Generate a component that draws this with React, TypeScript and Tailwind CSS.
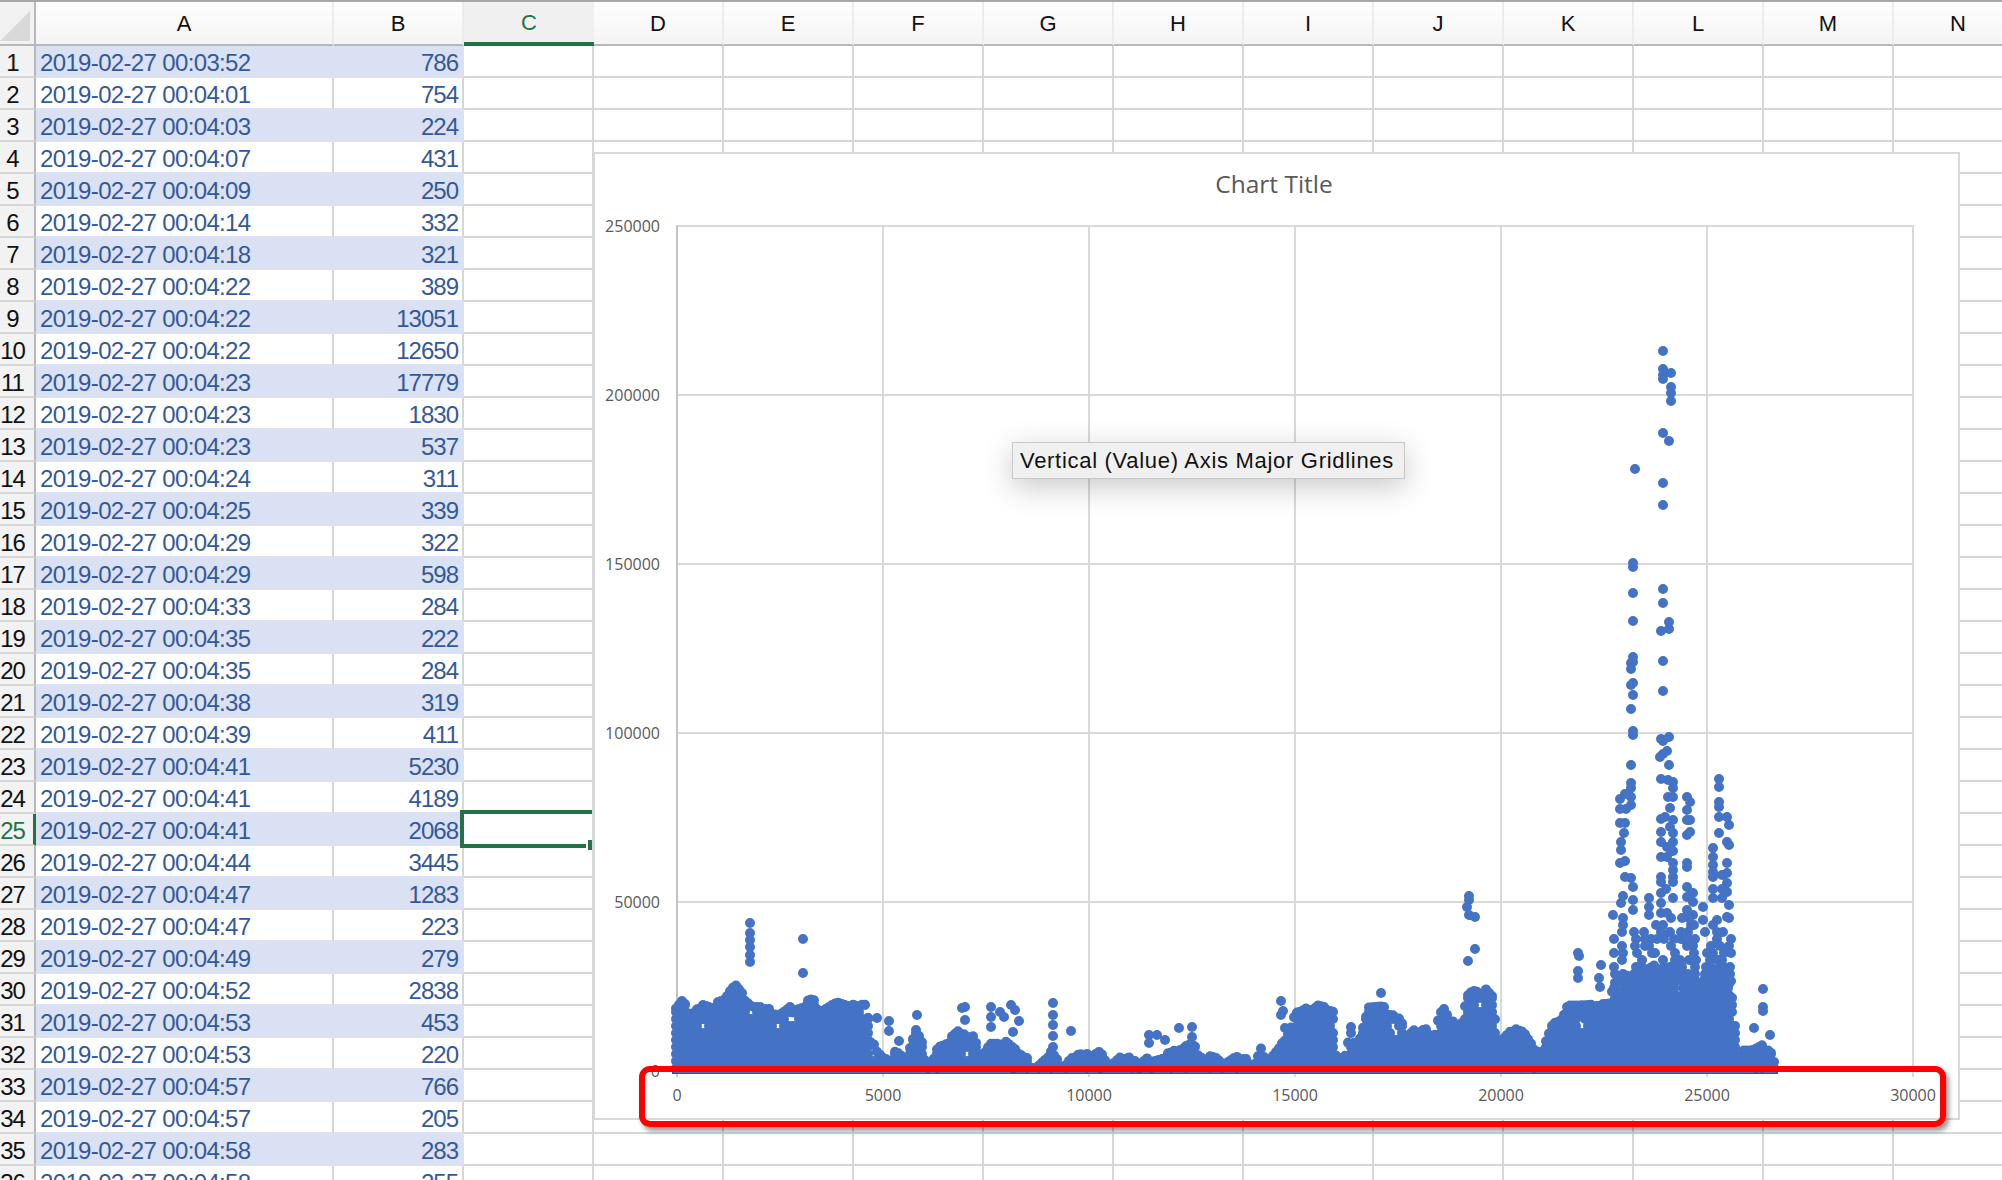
import React from 'react'

const times = ['03:52','04:01','04:03','04:07','04:09','04:14','04:18','04:22','04:22','04:22','04:23','04:23','04:23','04:24','04:25','04:29','04:29','04:33','04:35','04:35','04:38','04:39','04:41','04:41','04:41','04:44','04:47','04:47','04:49','04:52','04:53','04:53','04:57','04:57','04:58','04:58']
const values = [786,754,224,431,250,332,321,389,13051,12650,17779,1830,537,311,339,322,598,284,222,284,319,411,5230,4189,2068,3445,1283,223,279,2838,453,220,766,205,283,255]
const columns = ['D','E','F','G','H','I','J','K','L','M','N']

// top edge of the dot mass, page px
const envelope: [number, number][] = [
  [674,1008],[682,998],[691,1007],[703,993],[715,997],[725,993],[735,977],[743,987],[752,995],[770,995],[776,1013],[787,1005],[796,998],[812,992],[821,998],[837,988],[857,995],[866,995],[868,1008],[870,1032],[877,1037],[883,1043],[899,1050],[906,1057],[916,1027],[921,1037],[928,1052],[939,1037],[950,1033],[965,1020],[975,1035],[979,1050],[991,1030],[999,1030],[1015,1043],[1022,1053],[1035,1057],[1051,1043],[1062,1057],[1071,1045],[1082,1043],[1091,1050],[1102,1043],[1111,1060],[1120,1052],[1129,1048],[1138,1062],[1149,1053],[1171,1047],[1178,1043],[1191,1037],[1205,1047],[1216,1050],[1225,1058],[1234,1052],[1245,1048],[1254,1053],[1261,1035],[1267,1052],[1279,1037],[1285,1027],[1296,1003],
  [1300,1002],[1317,993],[1335,998],[1336,1043],[1343,1052],[1351,1017],[1356,1043],[1367,1003],[1381,1002],[1401,1005],[1407,1033],[1419,1022],[1425,1018],[1434,1023],[1443,998],[1450,1015],[1461,1013],[1467,983],[1475,975],[1484,983],[1493,993],[1497,1037],[1510,1023],[1524,1028],[1533,1042],[1542,1048],[1546,1033],[1553,1015],[1562,1013],[1569,995],[1587,995],[1609,993],[1613,977],[1654,953],[1672,973],[1680,993],[1685,980],[1694,993],[1705,970],[1730,967],[1733,995],[1736,1023],[1736,1053],[1741,1043],[1752,1043],[1763,1037],[1770,1035],[1775,1050],[1779,1052],
]

// stray dots above the mass
const strays: [number, number][] = [
  [1663,351],[1663,369],[1663,375],[1663,379],[1671,373],[1671,387],[1671,393],[1671,401],[1663,433],[1669,441],[1635,469],[1663,483],[1663,505],[1633,563],[1633,567],[1663,589],[1663,603],[1633,593],[1633,621],[1669,622],[1669,629],[1661,631],[1633,657],[1633,662],[1631,663],[1631,669],[1633,683],[1631,685],[1633,695],[1631,709],[1633,731],[1633,735],[1663,661],[1663,691],[1669,737],[1661,739],[1663,741],[1667,751],[1663,754],[1660,757],[1669,765],[1631,765],[1631,783],[1631,788],[1661,779],[1668,780],[1673,782],[1673,788],[1673,797],[1668,797],[1625,794],[1620,799],[1631,797],[1631,805],[1620,809],[1626,809],[1620,823],[1625,823],[1624,833],[1621,842],[1621,850],[1625,861],[1620,863],[1625,877],[1631,878],[1633,887],[1623,896],[1621,903],[1633,900],[1613,915],[1623,918],[1633,910],[1649,898],[1649,907],[1649,915],
  [1670,808],[1665,817],[1661,819],[1673,820],[1670,827],[1673,833],[1661,832],[1673,842],[1661,842],[1667,847],[1673,851],[1661,857],[1667,857],[1673,863],[1673,870],[1673,877],[1673,882],[1661,877],[1661,882],[1666,889],[1673,898],[1661,893],[1661,903],[1661,913],[1667,913],
  [1687,797],[1690,802],[1687,810],[1687,820],[1690,820],[1687,835],[1690,832],[1687,863],[1687,867],[1687,887],[1693,893],[1687,897],[1693,902],[1687,910],[1693,915],[1703,907],[1703,920],
  [1719,779],[1719,787],[1719,802],[1719,807],[1719,817],[1727,817],[1729,825],[1719,833],[1727,842],[1729,845],[1713,848],[1713,857],[1713,865],[1713,872],[1713,877],[1727,863],[1727,873],[1722,875],[1727,883],[1713,889],[1722,889],[1727,892],[1713,898],[1722,898],[1729,905],[1717,920],[1727,917],
  [1469,896],[1469,900],[1467,907],[1469,915],[1475,917],[1475,949],[1468,961],[1763,989],[1763,1007],[1763,1011],[1754,1028],[1770,1035],[1578,953],[1579,956],[1578,971],[1578,978],[1601,965],[1599,978],[1600,987],
  [750,923],[750,933],[750,940],[750,947],[750,955],[750,962],[803,939],[803,973],[877,1018],[889,1021],[889,1031],[899,1041],[917,1015],[962,1008],[965,1007],[965,1020],[991,1007],[991,1017],[991,1027],[1000,1012],[1004,1017],[1011,1005],[1015,1010],[1019,1021],[1013,1032],[1053,1003],[1053,1015],[1053,1025],[1053,1036],[1053,1047],[1071,1031],[1149,1035],[1157,1035],[1149,1043],[1165,1040],[1179,1028],[1192,1027],[1192,1037],[1281,1001],[1283,1011],[1281,1015],[1285,1028],[1381,993],
]

// the columns of the tall spike, dots get sparser going up
const spikeColumns = [1613,1621,1633,1641,1649,1655,1661,1667,1673,1680,1687,1693,1703,1710,1716,1722,1728]

function topAt(x: number) {
  for (let i = 1; i < envelope.length; i++) {
    const [x0, y0] = envelope[i - 1]
    const [x1, y1] = envelope[i]
    if (x <= x1) return y0 + ((y1 - y0) * (x - x0)) / (x1 - x0 || 1)
  }
  return 1060
}

function buildDots() {
  let seed = 41
  const rand = () => {
    seed = (seed * 16807) % 2147483647
    return seed / 2147483647
  }
  let d = ''
  let offset = 0
  let nextChunk = 0
  for (let x = 676; x <= 1774; x += 3) {
    if (x >= nextChunk) {
      offset = rand() * 12 - 2
      nextChunk = x + 6 + rand() * 10
    }
    const top = topAt(x) + 5 + offset
    for (let y = 1068; y > top; y -= 7) {
      // leave small holes close to the top edge
      if (y - top < 24 && rand() < 0.25) continue
      d += `M${x} ${y}h0`
    }
    d += `M${x} ${Math.min(top, 1068).toFixed(1)}h0`
  }
  for (const x of spikeColumns) {
    for (let y = 918; y < 1000; y += 7) {
      if (rand() < (y - 880) / 110) d += `M${x + Math.round(rand() * 4)} ${y}h0`
    }
  }
  for (const [x, y] of strays) d += `M${x} ${y}h0`
  return d
}

const dots = buildDots()
const gridX = [677, 883, 1089, 1295, 1501, 1707, 1913]
const gridY = [226, 395, 564, 733, 902, 1071]
const yLabels = ['250000', '200000', '150000', '100000', '50000', '0']
const xLabels = ['0', '5000', '10000', '15000', '20000', '25000', '30000']

function Chart() {
  return (
    <div className="absolute left-[593px] top-[152px] h-[968px] w-[1367px] border-2 border-[#d9d9d9] bg-white">
      <svg viewBox="595 154 1363 964" className="block h-full w-full">
        {gridY.map((y) => (
          <line key={y} x1={676} x2={1914} y1={y} y2={y} stroke="#d9d9d9" strokeWidth={2} />
        ))}
        {gridX.map((x, i) => (
          <line key={x} x1={x} x2={x} y1={226} y2={1077} stroke={i === 0 ? '#c4c4c4' : '#d9d9d9'} strokeWidth={2} />
        ))}
        <rect x={672} y={1068} width={1106} height={6} fill="#2f5597" />
        <path d={dots} stroke="#4472c4" strokeWidth={10} strokeLinecap="round" fill="none" />
        <text x={1274} y={193} textAnchor="middle" className="fill-[#595959] text-[24.5px] [font-family:'Open_Sans',sans-serif]">
          Chart Title
        </text>
        {yLabels.map((label, i) => (
          <text key={label} x={660} y={gridY[i] + 6} textAnchor="end" className="fill-[#595959] text-[16px] [font-family:'Open_Sans',sans-serif]">
            {label}
          </text>
        ))}
        {xLabels.map((label, i) => (
          <text key={label} x={gridX[i]} y={1101} textAnchor="middle" className="fill-[#595959] text-[16px] [font-family:'Open_Sans',sans-serif]">
            {label}
          </text>
        ))}
      </svg>
    </div>
  )
}

function HeaderRow() {
  return (
    <div className="flex h-[46px] border-t-2 border-[#a8a8a8] text-[22px] text-[#111]">
      <div className="relative w-[36px] shrink-0 border-r-2 border-b-2 border-[#b8b8b8] bg-[#f2f2f2]">
        <svg viewBox="0 0 30 30" className="absolute left-0 top-[9px] h-[30px] w-[30px]">
          <path d="M0 30L30 0V30Z" fill="#d9d9d9" />
        </svg>
      </div>
      <div className="flex w-[298px] shrink-0 items-center justify-center border-r-2 border-b-2 border-r-[#ececec] border-b-[#b8b8b8] bg-gradient-to-b from-white to-[#f4f4f4]">A</div>
      <div className="flex w-[130px] shrink-0 items-center justify-center border-r-2 border-b-2 border-r-[#ececec] border-b-[#b8b8b8] bg-gradient-to-b from-white to-[#f4f4f4]">B</div>
      <div className="flex w-[130px] shrink-0 items-center justify-center border-b-4 border-[#217346] bg-[#f0f0f0] text-[#217346]">C</div>
      {columns.map((c) => (
        <div key={c} className="flex w-[130px] shrink-0 items-center justify-center border-r-2 border-b-2 border-r-[#ececec] border-b-[#b8b8b8] bg-gradient-to-b from-white to-[#f4f4f4]">
          {c}
        </div>
      ))}
    </div>
  )
}

function Row({ index }: { index: number }) {
  const band = index % 2 === 0
  const active = index === 24
  return (
    <div className="flex h-[32px] text-[24px] leading-[33px]">
      <div className={`flex w-[36px] shrink-0 border-b-2 border-b-[#d6d6d6] bg-[#f2f2f2] ${active ? 'border-r-[3px] border-r-[#217346] text-[#217346]' : 'border-r-2 border-r-[#b8b8b8] text-[#111]'}`}>
        <span className="w-[25px] text-center tracking-[-1px]">{index + 1}</span>
      </div>
      <div className={`w-[298px] shrink-0 border-b-2 border-b-[#d9e1f2] pl-[4px] tracking-[-0.65px] text-[#34599b] ${band ? 'border-r-2 border-r-[#d9e1f2] bg-[#d9e1f2]' : 'border-r-2 border-r-[#d6d6d6]'}`}>
        2019-02-27 00:{times[index]}
      </div>
      <div className={`w-[130px] shrink-0 border-b-2 border-b-[#d9e1f2] pr-[4px] text-right tracking-[-1px] text-[#34599b] ${band ? 'border-r-2 border-r-[#d9e1f2] bg-[#d9e1f2]' : 'border-r-2 border-r-[#d6d6d6]'}`}>
        {values[index]}
      </div>
      <div className="relative w-[130px] shrink-0 border-r-2 border-b-2 border-[#d6d6d6]">
        {active && (
          <>
            <div className="absolute left-[-4px] top-[-4px] h-[38px] w-[132px] border-y-4 border-l-4 border-[#217346]" />
            <div className="absolute right-0 top-[26px] h-[10px] w-[6px] border-l-2 border-white bg-[#217346]" />
          </>
        )}
      </div>
      {columns.map((c) => (
        <div key={c} className="w-[130px] shrink-0 border-r-2 border-b-2 border-[#d6d6d6]" />
      ))}
    </div>
  )
}

export default function App() {
  return (
    <div className="relative h-[1180px] w-[2002px] overflow-hidden bg-white [font-family:'Liberation_Sans',sans-serif]">
      <HeaderRow />
      {times.map((_, i) => (
        <Row key={i} index={i} />
      ))}
      <Chart />
      <div className="absolute left-[1012px] top-[442px] border border-[#c8c8c8] bg-[#f0f0f0] py-[4px] pl-[7px] pr-[10px] text-[22px] leading-[27px] tracking-[0.7px] text-[#111] shadow-[0_8px_30px_rgba(0,0,0,0.22)]">
        Vertical (Value) Axis Major Gridlines
      </div>
      <div className="absolute left-[639px] top-[1066px] h-[61px] w-[1307px] rounded-[11px] border-[6px] border-[#ff0000] shadow-[3px_4px_5px_rgba(0,0,0,0.4)]" />
    </div>
  )
}
